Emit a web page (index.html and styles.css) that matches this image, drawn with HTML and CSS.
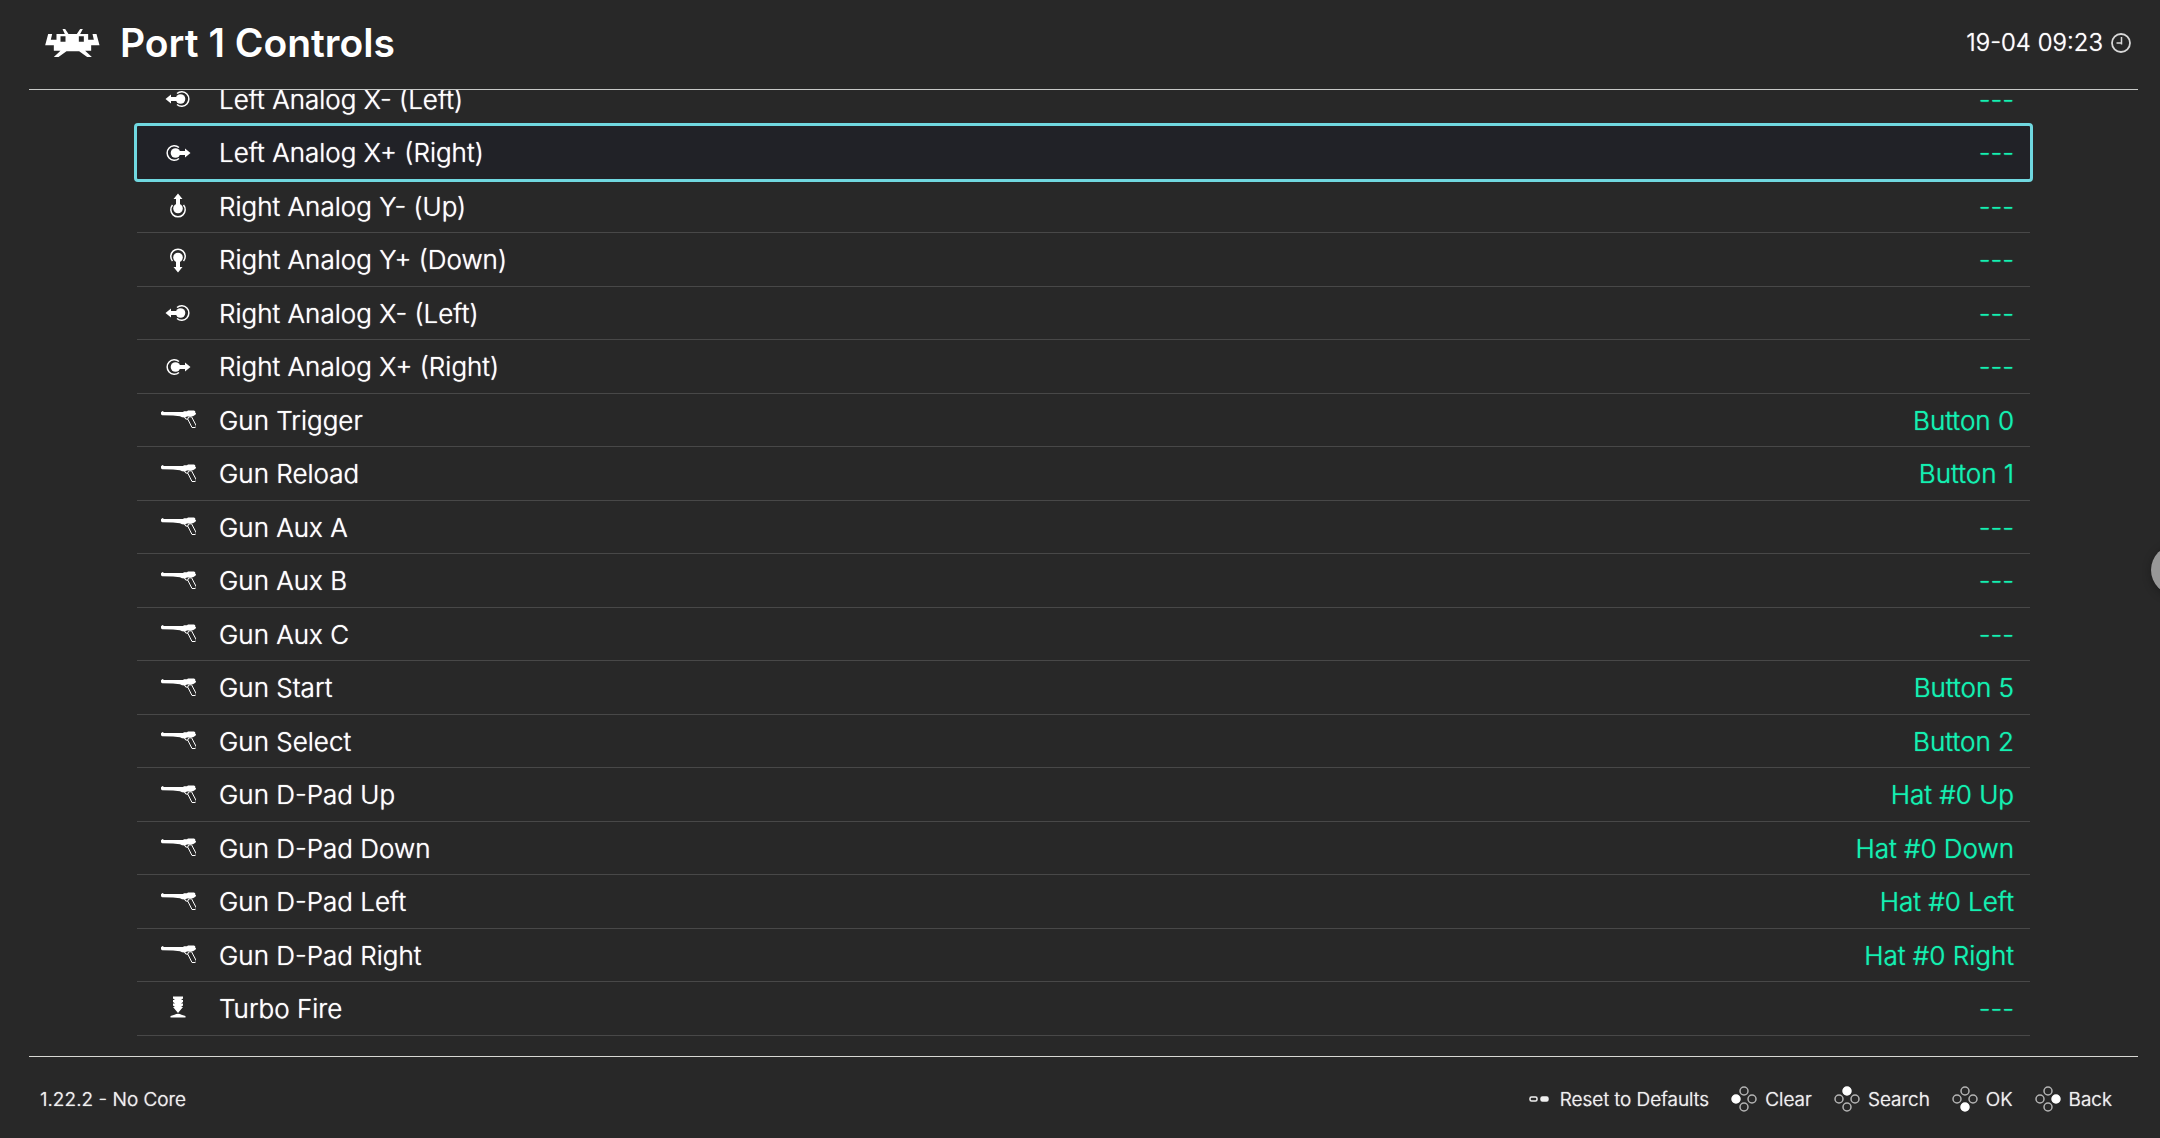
FILE: index.html
```html
<!DOCTYPE html>
<html lang="en">
  <head>
    <meta charset="UTF-8" />
    <meta name="viewport" content="width=device-width, initial-scale=1.0" />
    <title>Port 1 Controls</title>
    <link rel="stylesheet" href="styles.css">
  </head>
  <body>
    <svg class="sprite" aria-hidden="true">
      <symbol id="stick-left" viewBox="0 0 36 36">
        <path d="M5.500 18l5.500-4.500v2.500h6v4h-6v2.500z" fill="currentColor" />
        <circle cx="20.500" cy="18" r="4.800" fill="currentColor" />
        <path d="M17 12.500a7.200 7.200 0 1 1 0 11" fill="none" stroke="currentColor" stroke-width="1.500" />
      </symbol>
      <symbol id="gun" viewBox="0 0 36 36">
        <path d="M1 10.200l1.500-1.200 1.500 1h19l1-.8h3l1-.7h6l1.200.8v1.200l1 1.300-1.200 1.300-2 1.200-6 .2-2 1-3-.3-2-1-7-.7-11-.3-1-1z" fill="currentColor" />
        <path d="M28.500 15l3-.3 5 9.500-1.300 1.300h-3.200l-4.200-8.300z M24.500 15l1.200 2 2.300.2" fill="none" stroke="currentColor" stroke-width="1" />
      </symbol>
      <symbol id="turbo" viewBox="0 0 36 36">
        <path d="M13 5.500h10v2l-2 1.500h2v2l-2 1.500h2v2l-2 1.500h2l-5 6-5-6h2l-2-1.500v-2h2l-2-1.500v-2h2l-2-1.500z" fill="currentColor" />
        <path d="M10.500 26.500v-1.500l4-1.200q3.500-2 7 0l4 1.200v1.500z" fill="currentColor" />
      </symbol>
    </svg>

    <header class="header">
      <svg class="logo" viewBox="30 24 164 84" fill="currentColor" aria-hidden="true">
        <path fill-rule="evenodd" d="M82 24h8l10 15h25l10-15h8l-8 15h24v17h17l-4-17h12l9 34h-25v16h-18l20 19h-14l-24-17h-38l-24 17H56l20-19H56V73H30l9-34h12l-4 17h17V39h25z M76 46v16h15V46z M131 46v16h15V46z" />
      </svg>
      <h1 class="title">Port 1 Controls</h1>
      <time class="clock">19-04 09:23</time>
      <svg class="clock-icon" viewBox="0 0 20 20" fill="none" stroke="currentColor" aria-hidden="true">
        <circle cx="10" cy="10" r="9" stroke-width="1.800" />
        <path d="M10.500 4v7.500M5.500 10h5.500" stroke-width="1.500" />
      </svg>
    </header>

    <main class="content">
      <ul class="menu">
        <li><button class="item"><svg class="icon"><use href="#stick-left" /></svg><span class="label">Left Analog X- (Left)</span><span class="value">---</span></button></li>
        <li><button class="item selected"><svg class="icon right"><use href="#stick-left" /></svg><span class="label">Left Analog X+ (Right)</span><span class="value">---</span></button></li>
        <li><button class="item"><svg class="icon up"><use href="#stick-left" /></svg><span class="label">Right Analog Y- (Up)</span><span class="value">---</span></button></li>
        <li><button class="item"><svg class="icon down"><use href="#stick-left" /></svg><span class="label">Right Analog Y+ (Down)</span><span class="value">---</span></button></li>
        <li><button class="item"><svg class="icon"><use href="#stick-left" /></svg><span class="label">Right Analog X- (Left)</span><span class="value">---</span></button></li>
        <li><button class="item"><svg class="icon right"><use href="#stick-left" /></svg><span class="label">Right Analog X+ (Right)</span><span class="value">---</span></button></li>
        <li><button class="item"><svg class="icon"><use href="#gun" /></svg><span class="label">Gun Trigger</span><span class="value">Button 0</span></button></li>
        <li><button class="item"><svg class="icon"><use href="#gun" /></svg><span class="label">Gun Reload</span><span class="value">Button 1</span></button></li>
        <li><button class="item"><svg class="icon"><use href="#gun" /></svg><span class="label">Gun Aux A</span><span class="value">---</span></button></li>
        <li><button class="item"><svg class="icon"><use href="#gun" /></svg><span class="label">Gun Aux B</span><span class="value">---</span></button></li>
        <li><button class="item"><svg class="icon"><use href="#gun" /></svg><span class="label">Gun Aux C</span><span class="value">---</span></button></li>
        <li><button class="item"><svg class="icon"><use href="#gun" /></svg><span class="label">Gun Start</span><span class="value">Button 5</span></button></li>
        <li><button class="item"><svg class="icon"><use href="#gun" /></svg><span class="label">Gun Select</span><span class="value">Button 2</span></button></li>
        <li><button class="item"><svg class="icon"><use href="#gun" /></svg><span class="label">Gun D-Pad Up</span><span class="value">Hat #0 Up</span></button></li>
        <li><button class="item"><svg class="icon"><use href="#gun" /></svg><span class="label">Gun D-Pad Down</span><span class="value">Hat #0 Down</span></button></li>
        <li><button class="item"><svg class="icon"><use href="#gun" /></svg><span class="label">Gun D-Pad Left</span><span class="value">Hat #0 Left</span></button></li>
        <li><button class="item"><svg class="icon"><use href="#gun" /></svg><span class="label">Gun D-Pad Right</span><span class="value">Hat #0 Right</span></button></li>
        <li><button class="item"><svg class="icon"><use href="#turbo" /></svg><span class="label">Turbo Fire</span><span class="value">---</span></button></li>
      </ul>
    </main>

    <footer class="footer">
      <span class="version">1.22.2 - No Core</span>
      <button class="hint">
        <svg class="pad" viewBox="0 0 26 26" fill="none" stroke="currentColor" stroke-width="1.500" aria-hidden="true">
          <rect x="4" y="11" width="7" height="4" rx="1.500" />
          <rect x="15" y="11" width="7" height="4" rx="1.500" fill="currentColor" />
        </svg>
        Reset to Defaults
      </button>
      <button class="hint">
        <svg class="pad" viewBox="0 0 26 26" aria-hidden="true"><circle cx="13" cy="5" r="4" /><circle cx="21" cy="13" r="4" /><circle cx="13" cy="21" r="4" /><circle class="on" cx="5" cy="13" r="4" /></svg>
        Clear
      </button>
      <button class="hint">
        <svg class="pad" viewBox="0 0 26 26" aria-hidden="true"><circle class="on" cx="13" cy="5" r="4" /><circle cx="21" cy="13" r="4" /><circle cx="13" cy="21" r="4" /><circle cx="5" cy="13" r="4" /></svg>
        Search
      </button>
      <button class="hint">
        <svg class="pad" viewBox="0 0 26 26" aria-hidden="true"><circle cx="13" cy="5" r="4" /><circle cx="21" cy="13" r="4" /><circle class="on" cx="13" cy="21" r="4" /><circle cx="5" cy="13" r="4" /></svg>
        OK
      </button>
      <button class="hint">
        <svg class="pad" viewBox="0 0 26 26" aria-hidden="true"><circle cx="13" cy="5" r="4" /><circle class="on" cx="21" cy="13" r="4" /><circle cx="13" cy="21" r="4" /><circle cx="5" cy="13" r="4" /></svg>
        Back
      </button>
    </footer>

    <button class="handle" aria-label="Overlay menu"></button>
  </body>
</html>
```
FILE: styles.css
```css
* {
  box-sizing: border-box;
}
body {
  display: flex;
  flex-direction: column;
  height: 100vh;
  margin: 0;
  padding: 0 22px 0 29px;
  overflow: hidden;
  background-color: #282828;
  color: #fff;
  font-family: Inter, "Liberation Sans", sans-serif;
  font-weight: 300;
  text-shadow: 0 0 1px currentColor;
}
button {
  border: 0;
  background: none;
  color: inherit;
  font: inherit;
  text-shadow: inherit;
  cursor: pointer;
}
.sprite {
  display: none;
}
.header {
  display: flex;
  align-items: center;
  height: 90px;
  padding: 0 7px 4px 16px;
  border-bottom: 1px solid #c8cac8;
  flex-shrink: 0;
}
.logo {
  width: 55px;
  height: 28px;
  margin-right: 20px;
}
.title {
  margin: 0;
  font-size: 39px;
  font-weight: 600;
  text-shadow: none;
}
.clock {
  margin-left: auto;
  font-size: 24px;
}
.clock-icon {
  width: 20px;
  height: 20px;
  margin-left: 8px;
  color: #d8d8d8;
}
.content {
  display: flex;
  flex: 1;
  flex-direction: column;
  justify-content: flex-end;
  min-height: 0;
  padding: 0 108px 20px 108px;
  overflow: hidden;
}
.menu {
  margin: 0;
  padding: 0;
  list-style: none;
}
.menu li {
  height: 53px;
  border-bottom: 1px solid #484848;
}
.menu li:nth-child(even) {
  height: 54px;
}
.item {
  display: flex;
  align-items: center;
  width: 100%;
  height: 100%;
  padding: 0 16px 0 23px;
  font-size: 26px;
  text-align: left;
}
.selected {
  border-radius: 1px;
  outline: 3px solid #70d8e0;
  background-color: #212227;
}
.icon {
  width: 36px;
  height: 36px;
  margin-right: 23px;
}
.right {
  transform: rotate(180deg);
}
.up {
  transform: rotate(90deg);
}
.down {
  transform: rotate(-90deg);
}
.value {
  margin-left: auto;
  color: #14f0b0;
  text-shadow: 0 0 1px currentColor;
}
.footer {
  display: flex;
  align-items: center;
  gap: 22px;
  height: 82px;
  padding: 3px 26px 0 11px;
  border-top: 1px solid #d8d8d4;
  color: #f0f0f0;
  font-size: 19px;
  flex-shrink: 0;
}
.version {
  margin-right: auto;
}
.hint {
  display: flex;
  align-items: center;
  gap: 8px;
  padding: 0;
}
.pad {
  width: 26px;
  height: 26px;
}
.pad circle {
  fill: none;
  stroke: #b4b4b4;
  stroke-width: 1.5;
}
.pad .on {
  fill: #fff;
  stroke: #fff;
}
/* half-hidden grip on the screen edge */
.handle {
  position: absolute;
  top: 545px;
  right: -41px;
  width: 50px;
  height: 50px;
  border-radius: 50%;
  background-color: #989898;
  box-shadow: 0 2px 10px rgba(0, 0, 0, 0.3);
}
```
